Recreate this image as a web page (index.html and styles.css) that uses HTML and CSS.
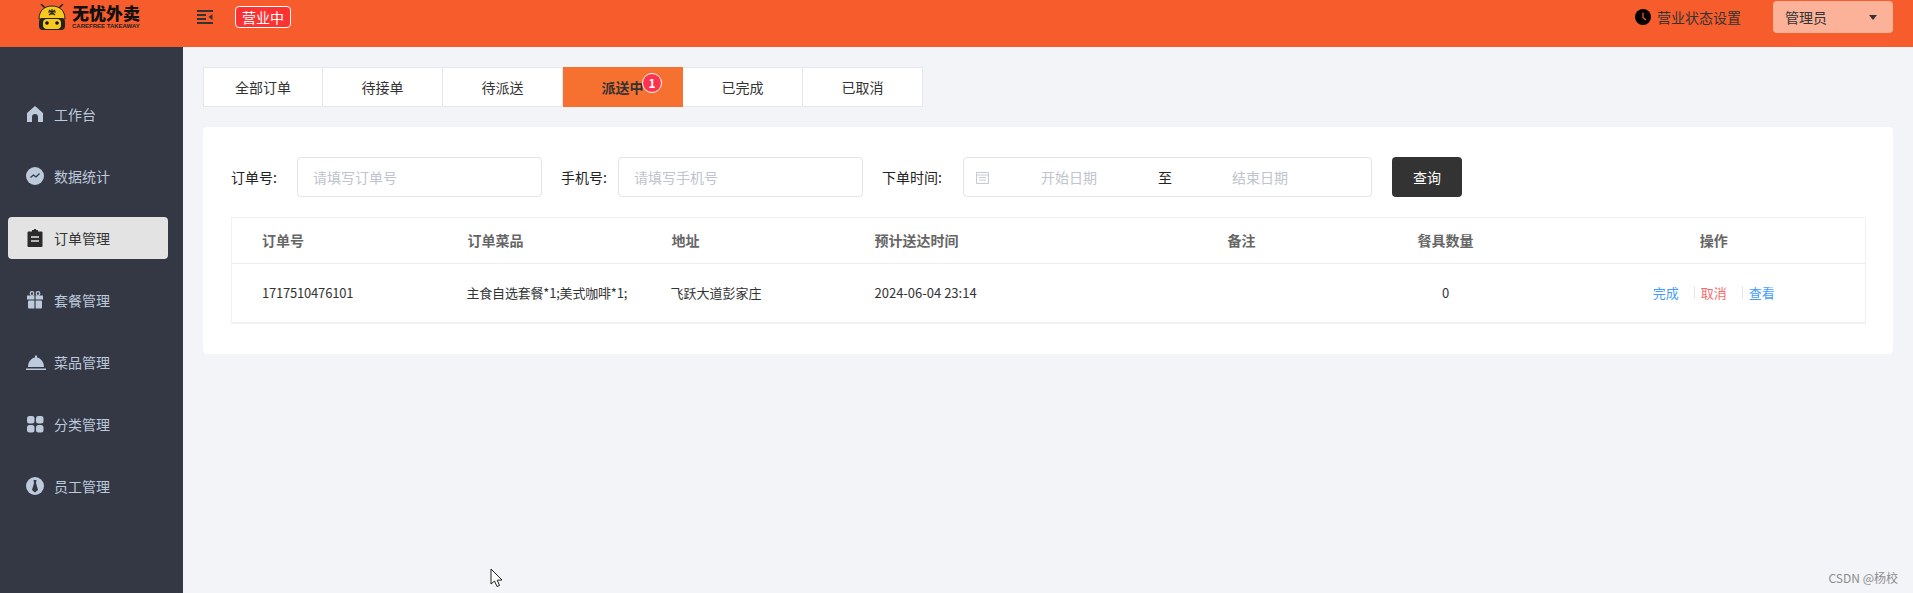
FILE: index.html
```html
<!DOCTYPE html>
<html lang="zh-CN">
<head>
    <meta charset="UTF-8">
    <title>订单管理</title>
    <link rel="stylesheet" href="styles.css">
</head>
<body>
    <!-- Top bar -->
    <header class="topbar">
        <div class="logo">
            <svg class="logo-icon" width="28" height="26" viewBox="0 0 28 26">
                <path d="M3 0 L7 4 M25 0 L21 4" stroke="#222" stroke-width="1.5"/>
                <path d="M1 15 C1 6 7 2 14 2 C21 2 27 6 27 15 Z" fill="#f7c81e" stroke="#222" stroke-width="1"/>
                <path d="M10 8 H18 M14 5 V11 M11 11 L17 6 M17 11 L11 6" stroke="#222" stroke-width="1.2"/>
                <rect x="1" y="14" width="26" height="12" rx="4" fill="#222"/>
                <rect x="5" y="15" width="18" height="10" rx="4" fill="#f7c81e"/>
                <circle cx="9" cy="19" r="1.8" fill="#111"/>
                <circle cx="19" cy="19" r="1.8" fill="#111"/>
            </svg>
            <div class="logo-text">
                <div class="logo-name">无忧外卖</div>
                <div class="logo-sub">CAREFREE TAKEAWAY</div>
            </div>
        </div>
        <svg class="menu-icon" width="16" height="14" viewBox="0 0 16 14">
            <path d="M0 1 H16 M0 13 H16 M0 5 H9 M0 9 H9" stroke="#333" stroke-width="2"/>
            <path d="M15.5 4 L11.5 7 L15.5 10 Z" fill="#333"/>
        </svg>
        <span class="status-tag">营业中</span>
        <div class="topbar-right">
            <svg class="clock-icon" width="16" height="16" viewBox="0 0 16 16">
                <circle cx="8" cy="8" r="8" fill="#000"/>
                <path d="M8 3.5 V8.5 L11 11" stroke="#f95d2c" stroke-width="1.2" fill="none"/>
            </svg>
            <span class="status-setting">营业状态设置</span>
            <div class="user-btn">
                <span>管理员</span>
                <i class="caret"></i>
            </div>
        </div>
    </header>

    <div class="main">
        <!-- Sidebar -->
        <nav class="sidebar">
            <a class="nav-item">
                <svg class="nav-icon" viewBox="0 0 18 18"><path d="M9 1 L17 8 V17 H12 V12 a3 3 0 0 0 -6 0 V17 H1 V8 Z" fill="#bccadc"/></svg>
                工作台
            </a>
            <a class="nav-item">
                <svg class="nav-icon" viewBox="0 0 18 18"><circle cx="9" cy="9" r="9" fill="#bccadc"/><path d="M4.5 10.5 L7.5 8 L10 10 L13.5 6.5" stroke="#343744" stroke-width="1.3" fill="none"/></svg>
                数据统计
            </a>
            <a class="nav-item active">
                <svg class="nav-icon" viewBox="0 0 18 18"><path d="M2.5 2.5 H6 V1 H12 V2.5 H15.5 a1 1 0 0 1 1 1 V17 a1 1 0 0 1 -1 1 H2.5 a1 1 0 0 1 -1 -1 V3.5 a1 1 0 0 1 1 -1 Z" fill="#2b2b2b"/><path d="M5 8 H13 M5 12 H13" stroke="#e3e3e3" stroke-width="1.6"/><rect x="8" y="0" width="2" height="2" fill="#2b2b2b"/></svg>
                订单管理
            </a>
            <a class="nav-item">
                <svg class="nav-icon" viewBox="0 0 18 18"><rect x="1" y="4.5" width="16" height="4" fill="#bccadc"/><rect x="2" y="9.5" width="14" height="8" rx="1" fill="#bccadc"/><path d="M9 4.5 V18" stroke="#343744" stroke-width="1.2"/><circle cx="6" cy="2.5" r="1.8" fill="none" stroke="#bccadc" stroke-width="1.2"/><circle cx="12" cy="2.5" r="1.8" fill="none" stroke="#bccadc" stroke-width="1.2"/></svg>
                套餐管理
            </a>
            <a class="nav-item">
                <svg class="nav-icon nav-icon-wide" viewBox="0 0 20 18"><path d="M2 14 C2 8 6 5 9 4.5 V3 a1.2 1.2 0 0 1 2 0 V4.500 C14 5 18 8 18 14 Z" fill="#bccadc"/><rect x="0" y="15.500" width="20" height="1.500" fill="#bccadc"/></svg>
                菜品管理
            </a>
            <a class="nav-item">
                <svg class="nav-icon" viewBox="0 0 18 18"><rect x="1" y="1" width="7.500" height="7.500" rx="2.500" fill="#bccadc"/><rect x="10" y="1" width="7.500" height="7.500" rx="2.500" fill="#bccadc"/><rect x="1" y="10" width="7.500" height="7.500" rx="2.500" fill="#bccadc"/><rect x="10" y="10" width="7.500" height="7.500" rx="2.500" fill="#bccadc"/></svg>
                分类管理
            </a>
            <a class="nav-item">
                <svg class="nav-icon" viewBox="0 0 18 18"><circle cx="9" cy="9" r="9" fill="#bccadc"/><path d="M7.500 3 H10.500 L10 6 L12 13 L9 15.500 L6 13 L8 6 Z" fill="#343744"/></svg>
                员工管理
            </a>
        </nav>

        <!-- Order list -->
        <section class="content">
            <div class="tabs">
                <div class="tab">全部订单</div>
                <div class="tab">待接单</div>
                <div class="tab">待派送</div>
                <div class="tab active">派送中<span class="badge">1</span></div>
                <div class="tab">已完成</div>
                <div class="tab">已取消</div>
            </div>

            <div class="card">
                <div class="filter">
                    <label class="filter-label label-order">订单号:</label>
                    <input class="text-input" placeholder="请填写订单号">
                    <label class="filter-label label-phone">手机号:</label>
                    <input class="text-input" placeholder="请填写手机号">
                    <label class="filter-label label-time">下单时间:</label>
                    <div class="date-range">
                        <svg class="date-icon" width="13" height="13" viewBox="0 0 13 13">
                            <path d="M.5 1.500 H12.500 V12.500 H.5 Z" fill="none" stroke="#c6cad3"/>
                            <path d="M1 4 H12 M3 6.500 H10 M3 9 H10" stroke="#c6cad3"/>
                        </svg>
                        <span class="date-start">开始日期</span>
                        <span class="date-sep">至</span>
                        <span class="date-end">结束日期</span>
                    </div>
                    <button class="search-btn">查询</button>
                </div>

                <table class="order-table">
                    <colgroup>
                        <col class="col-id"><col class="col-dish"><col class="col-addr"><col class="col-time">
                        <col class="col-note"><col class="col-qty"><col class="col-ops">
                    </colgroup>
                    <thead>
                        <tr>
                            <th>订单号</th>
                            <th>订单菜品</th>
                            <th>地址</th>
                            <th>预计送达时间</th>
                            <th class="center">备注</th>
                            <th class="center">餐具数量</th>
                            <th class="center">操作</th>
                        </tr>
                    </thead>
                    <tbody>
                        <tr>
                            <td class="tight first">1717510476101</td>
                            <td class="tight">主食自选套餐*1;美式咖啡*1;</td>
                            <td>飞跃大道彭家庄</td>
                            <td class="first">2024-06-04 23:14</td>
                            <td class="center"></td>
                            <td class="center">0</td>
                            <td class="center">
                                <div class="ops">
                                    <a class="op-blue">完成</a>
                                    <i class="op-sep"></i>
                                    <a class="op-red">取消</a>
                                    <i class="op-sep"></i>
                                    <a class="op-blue">查看</a>
                                </div>
                            </td>
                        </tr>
                    </tbody>
                </table>
            </div>
        </section>
    </div>

    <svg class="cursor" width="14" height="20" viewBox="0 0 14 20">
        <path d="M1 1 V16 L4.500 13 L7 18.500 L9.500 17.500 L7.200 12.200 L12 12 Z" fill="#fff" stroke="#222" stroke-width="1"/>
    </svg>
    <div class="watermark">CSDN @杨校</div>
</body>
</html>
```

FILE: styles.css
```css
* {
    box-sizing: border-box;
}
html, body {
    height: 100%;
}
body {
    margin: 0;
    overflow: hidden;
    display: flex;
    flex-direction: column;
    background-color: #f3f4f7;
    color: #333;
    font-family: "Noto Sans CJK SC", "Open Sans", sans-serif;
    font-size: 14px;
}

/* Top bar */
.topbar {
    height: 47px;
    flex: none;
    display: flex;
    align-items: center;
    padding: 0 20px 13px 38px;
    background-color: #f75d2c;
}
.logo {
    width: 159px;
    display: flex;
    align-items: center;
    gap: 6px;
}
.logo-name {
    font-size: 17px;
    line-height: 18px;
    font-weight: 900;
    color: #111;
}
.logo-sub {
    font-family: "Liberation Sans", sans-serif;
    font-size: 6px;
    line-height: 8px;
    font-weight: bold;
    color: #222;
}
.menu-icon {
    display: block;
}
.status-tag {
    margin-left: 22px;
    width: 56px;
    height: 22px;
    line-height: 20px;
    text-align: center;
    color: #fff;
    background-color: #fd3333;
    border: 1px solid #fff;
    border-radius: 4px;
}
.topbar-right {
    margin-left: auto;
    display: flex;
    align-items: center;
}
.status-setting {
    margin-left: 6px;
}
.user-btn {
    margin-left: 32px;
    width: 120px;
    height: 32px;
    display: flex;
    align-items: center;
    justify-content: space-between;
    padding: 0 16px 0 12px;
    background-color: #fcb299;
    border-radius: 4px;
}
.caret {
    width: 0;
    height: 0;
    border-left: 4px solid transparent;
    border-right: 4px solid transparent;
    border-top: 5px solid #333;
}

.main {
    flex: 1;
    display: flex;
    min-height: 0;
}

/* Sidebar */
.sidebar {
    width: 183px;
    flex: none;
    display: flex;
    flex-direction: column;
    gap: 20px;
    padding: 46px 15px 0 8px;
    background-color: #343744;
}
.nav-item {
    height: 42px;
    display: flex;
    align-items: center;
    padding-left: 19px;
    color: #bccadc;
    border-radius: 4px;
}
.nav-item.active {
    background-color: #e3e3e3;
    color: #333;
}
.nav-icon {
    width: 18px;
    height: 18px;
    margin-left: -1px;
    margin-right: 10px;
    flex: none;
}
.nav-icon-wide {
    width: 20px;
    margin-right: 8px;
}

/* Content */
.content {
    flex: 1;
    min-width: 0;
    padding: 20px;
}
.tabs {
    display: flex;
}
.tab {
    position: relative;
    width: 120px;
    height: 40px;
    line-height: 38px;
    text-align: center;
    background-color: #fff;
    border: 1px solid #e4e7ed;
    border-left-width: 0;
}
.tab:first-child {
    border-left-width: 1px;
}
.tab.active {
    background-color: #f6702f;
    border-color: #f6702f;
    font-weight: 700;
}
.badge {
    position: absolute;
    top: 5px;
    left: 79px;
    width: 20px;
    height: 20px;
    line-height: 18px;
    font-size: 12px;
    font-weight: bold;
    color: #fff;
    background-color: #fd3350;
    border: 1px solid #fff;
    border-radius: 50%;
}
.card {
    margin-top: 20px;
    padding: 30px 28px 30px 28px;
    background-color: #fff;
    border-radius: 4px;
}

/* Filter row */
.filter {
    display: flex;
    align-items: center;
    color: #222;
}
.filter-label {
    flex: none;
}
.label-order {
    width: 66px;
}
.label-phone {
    width: 57px;
}
.label-time {
    width: 81px;
}
.text-input {
    width: 245px;
    height: 40px;
    margin-right: 19px;
    padding: 0 15px;
    font: inherit;
    border: 1px solid #e2e4ea;
    border-radius: 4px;
    outline: none;
}
.text-input::placeholder {
    color: #c0c4cc;
}
.date-range {
    width: 409px;
    height: 40px;
    display: flex;
    align-items: center;
    padding-left: 12px;
    color: #c0c4cc;
    border: 1px solid #e2e4ea;
    border-radius: 4px;
}
.date-start {
    margin-left: 52px;
}
.date-sep {
    margin-left: 61px;
    color: #222;
}
.date-end {
    margin-left: 60px;
}
.search-btn {
    width: 70px;
    height: 40px;
    margin-left: 20px;
    font: inherit;
    color: #fff;
    background-color: #333;
    border: none;
    border-radius: 4px;
}

/* Table */
.order-table {
    width: 1634px;
    margin-top: 20px;
    table-layout: fixed;
    border-collapse: collapse;
    border: 1px solid #f0f1f5;
    border-bottom-width: 2px;
    font-size: 13px;
}
.col-id { width: 206px; }
.col-dish { width: 204px; }
.col-addr { width: 203px; }
.col-time { width: 310px; }
.col-note { width: 174px; }
.col-qty { width: 234px; }
.col-ops { width: 303px; }
.order-table th {
    height: 46px;
    padding: 0 0 2px 30px;
    text-align: left;
    font-size: 14px;
    font-weight: 700;
    color: #666;
    border-bottom: 1px solid #ebeef5;
}
.order-table td {
    height: 59px;
    padding: 0 0 0 29px;
    color: #333;
}
.order-table .first {
    padding-left: 30px;
}
.order-table .tight {
    letter-spacing: -0.2px;
}
.order-table .center {
    padding-left: 0;
    text-align: center;
}
.ops {
    display: flex;
    justify-content: center;
    align-items: center;
}
.op-blue {
    color: #419eff;
}
.op-red {
    color: #f56c6c;
}
.op-sep {
    width: 1px;
    height: 13px;
    margin: 0 6px 0 15px;
    background-color: #e4e7ed;
}

/* Overlays */
.cursor {
    position: absolute;
    left: 490px;
    top: 568px;
}
.watermark {
    position: absolute;
    right: 15px;
    top: 569px;
    font-size: 12px;
    color: #8d8d8d;
}
```
